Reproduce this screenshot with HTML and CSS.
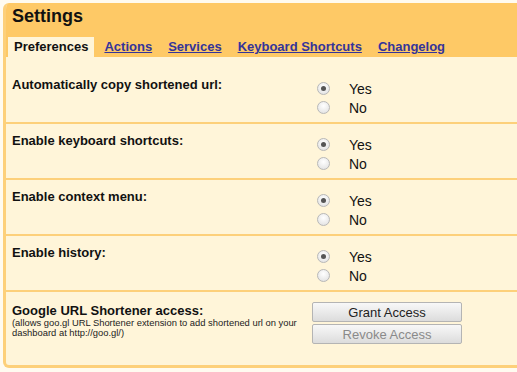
FILE: index.html
```html
<!DOCTYPE html>
<html>
<head>
<meta charset="utf-8">
<link rel="stylesheet" href="styles.css">
</head>
<body>
<div class="panel">
  <div class="header">
    <h1 class="title">Settings</h1>
    <nav class="tabs">
      <span class="tab active">Preferences</span>
      <a class="tab" href="#">Actions</a>
      <a class="tab" href="#">Services</a>
      <a class="tab" href="#">Keyboard Shortcuts</a>
      <a class="tab" href="#">Changelog</a>
    </nav>
  </div>
  <div class="content">
    <div class="row">
      <div class="label">Automatically copy shortened url:</div>
      <div class="options">
        <div class="opt"><span class="radio checked"></span><span class="opt-text">Yes</span></div>
        <div class="opt"><span class="radio"></span><span class="opt-text">No</span></div>
      </div>
    </div>
    <div class="row">
      <div class="label">Enable keyboard shortcuts:</div>
      <div class="options">
        <div class="opt"><span class="radio checked"></span><span class="opt-text">Yes</span></div>
        <div class="opt"><span class="radio"></span><span class="opt-text">No</span></div>
      </div>
    </div>
    <div class="row">
      <div class="label">Enable context menu:</div>
      <div class="options">
        <div class="opt"><span class="radio checked"></span><span class="opt-text">Yes</span></div>
        <div class="opt"><span class="radio"></span><span class="opt-text">No</span></div>
      </div>
    </div>
    <div class="row">
      <div class="label">Enable history:</div>
      <div class="options">
        <div class="opt"><span class="radio checked"></span><span class="opt-text">Yes</span></div>
        <div class="opt"><span class="radio"></span><span class="opt-text">No</span></div>
      </div>
    </div>
    <div class="row last">
      <div class="label-block">
        <div class="label big">Google URL Shortener access:</div>
        <div class="note">(allows goo.gl URL Shortener extension to add shortened url on your dashboard at http://goo.gl/)</div>
      </div>
      <div class="buttons">
        <button class="btn">Grant Access</button>
        <button class="btn disabled">Revoke Access</button>
      </div>
    </div>
  </div>
</div>
</body>
</html>
```
FILE: styles.css
```css
html, body {
  margin: 0;
  padding: 0;
  background: #fffbf0;
  overflow: hidden;
}
body {
  font-family: "Liberation Sans", Arial, sans-serif;
  color: #111;
}
.panel {
  margin: 3px 0 0 3px;
  width: 560px;
  border: 3px solid #fdd07a;
  border-top: none;
  border-radius: 6px;
  background: #fff5d9;
  overflow: hidden;
  height: 365px;
  box-sizing: border-box;
}
.header {
  background: #fec966;
  height: 54px;
  display: flex;
  flex-direction: column;
  justify-content: flex-end;
}
.title {
  margin: 0 0 0 6px;
  font-size: 18px;
  font-weight: bold;
  line-height: 22px;
  padding-bottom: 10px;
}
.tabs {
  display: flex;
  gap: 4px;
  margin-left: 2px;
}
.tab {
  padding: 0 6px;
  height: 20px;
  line-height: 20px;
  font-size: 13px;
  font-weight: bold;
  color: #34349a;
  text-decoration: underline;
}
.tab.active {
  background: #fff5d9;
  color: #111;
  text-decoration: none;
}
.content {
  padding-top: 11px;
}
.row {
  display: grid;
  grid-template-columns: 305px 1fr;
  height: 54px;
  border-bottom: 2px solid #fdd07a;
  padding-left: 6px;
}
.label {
  font-size: 13px;
  font-weight: bold;
  line-height: 16px;
  padding-top: 9px;
}
.options {
  padding-top: 11px;
  display: flex;
  flex-direction: column;
}
.opt {
  display: flex;
  align-items: center;
  height: 19px;
}
.radio {
  width: 11px;
  height: 11px;
  border-radius: 50%;
  border: 1px solid #b8b8b8;
  background: radial-gradient(circle at 50% 35%, #ffffff 0%, #e8e8e8 70%, #d8d8d8 100%);
  margin-left: 0;
  position: relative;
  box-sizing: content-box;
}
.radio.checked::after {
  content: "";
  position: absolute;
  left: 3px;
  top: 3px;
  width: 5px;
  height: 5px;
  border-radius: 50%;
  background: #555;
}
.opt-text {
  font-size: 14px;
  margin-left: 19px;
}
.row.last {
  border-bottom: none;
  height: 60px;
  grid-template-columns: 300px 1fr;
}
.label-block { padding-top: 12px; }
.label.big { padding-top: 0; font-size: 13px; line-height: 14px; }
.note {
  font-size: 9.4px;
  line-height: 10px;
  width: 292px;
  color: #222;
}
.buttons {
  display: flex;
  flex-direction: column;
  gap: 2px;
  padding-top: 10px;
}
.btn {
  width: 150px;
  height: 20px;
  font-family: "Liberation Sans", Arial, sans-serif;
  font-size: 13px;
  color: #222;
  border: 1px solid #b4b4b4;
  border-radius: 2px;
  background: linear-gradient(#f8f8f8, #dcdcdc);
  padding: 0;
  margin: 0;
}
.btn.disabled { color: #8a8a8a; }
```
